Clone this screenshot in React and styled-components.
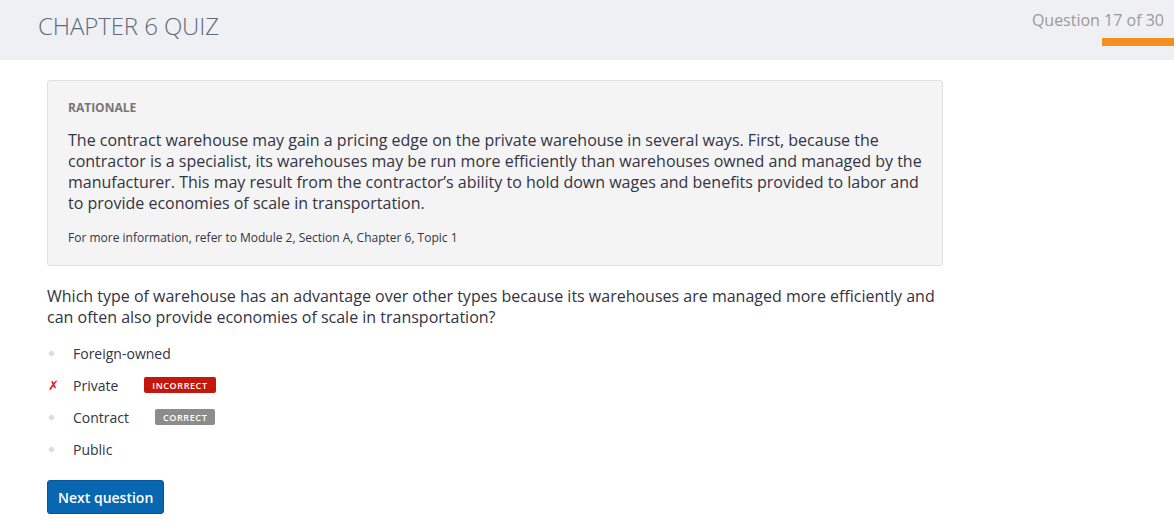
import React from "react";
import styled, { createGlobalStyle } from "styled-components";

const GlobalStyle = createGlobalStyle`
    body {
        margin: 0;
        background: #ffffff;
        font-family: "Open Sans", "Liberation Sans", sans-serif;
        color: #333333;
    }
`;

const Header = styled.div`
    height: 60px;
    background: #eff0f4;
    display: flex;
    justify-content: space-between;
    align-items: flex-start;
    box-sizing: border-box;
`;

const Title = styled.h1`
    margin: 0;
    padding: 10px 0 0 38px;
    font-size: 24px;
    line-height: 32px;
    font-weight: 300;
    color: #5f6b7a;
    letter-spacing: -0.1px;
`;

const Progress = styled.div`
    display: flex;
    flex-direction: column;
    align-items: flex-end;
    padding-top: 9px;
`;

const Counter = styled.div`
    font-size: 16px;
    color: #9a9a9a;
    padding-right: 10px;
    line-height: 22px;
`;

const ProgressBar = styled.div`
    margin-top: 7px;
    width: 72px;
    height: 8px;
    background: #f39020;
`;

const Main = styled.div`
    padding: 20px 0 0 47px;
    width: 896px;
`;

const Rationale = styled.div`
    background: #f4f4f4;
    border: 1px solid #e0e0e0;
    border-radius: 3px;
    padding: 18px 20px 19px 20px;
`;

const RationaleLabel = styled.div`
    font-size: 12px;
    font-weight: 700;
    color: #777777;
    margin-bottom: 14px;
`;

const RationaleText = styled.p`
    margin: 0;
    font-size: 16px;
    line-height: 21px;
    color: #333344;
`;

const MoreInfo = styled.p`
    margin: 16px 0 0 0;
    font-size: 12px;
    line-height: 16px;
    color: #333344;
`;

const Question = styled.p`
    margin: 20px 0 0 0;
    font-size: 16px;
    line-height: 21px;
    color: #333344;
`;

const Options = styled.ul`
    list-style: none;
    margin: 9px 0 0 0;
    padding: 0;
`;

const Option = styled.li`
    display: flex;
    align-items: center;
    height: 32px;
    font-size: 14px;
    color: #333344;
`;

const Marker = styled.span`
    width: 26px;
    display: flex;
    align-items: center;
    padding-left: 1px;
    box-sizing: border-box;
`;

const Cross = styled.span`
    color: #e8141c;
    font-family: "DejaVu Sans", sans-serif;
    font-size: 13px;
    font-weight: 700;
    font-style: italic;
`;

const Badge = styled.span`
    margin-left: 26px;
    height: 16px;
    padding: 0 8px;
    border-radius: 2px;
    background: ${(p) => (p.$correct ? "#8c8c8c" : "#c4180c")};
    color: #ffffff;
    font-size: 9px;
    font-weight: 600;
    letter-spacing: 0.6px;
    display: flex;
    align-items: center;
`;

const NextButton = styled.button`
    margin-top: 15px;
    height: 34px;
    padding: 0 10px;
    background: #0867b0;
    border: 1px solid #05579a;
    border-radius: 3px;
    color: #ffffff;
    font-family: "Open Sans", "Liberation Sans", sans-serif;
    font-size: 14px;
    font-weight: 600;
    cursor: pointer;
`;

const Dot = () => (
    <svg width="7" height="7" viewBox="0 0 7 7">
        <path d="M3.5 0.5 L6.5 3.5 L3.5 6.5 L0.5 3.5 Z" fill="#cfcfcf" />
        <rect x="2.5" y="2.5" width="2" height="2" fill="#ececec" />
    </svg>
);

const options = [
    { text: "Foreign-owned" },
    { text: "Private", wrong: true, badge: "INCORRECT" },
    { text: "Contract", badge: "CORRECT", correct: true },
    { text: "Public" },
];

export default function App() {
    return (
        <>
            <GlobalStyle />
            <Header>
                <Title>CHAPTER 6 QUIZ</Title>
                <Progress>
                    <Counter>Question 17 of 30</Counter>
                    <ProgressBar />
                </Progress>
            </Header>
            <Main>
                <Rationale>
                    <RationaleLabel>RATIONALE</RationaleLabel>
                    <RationaleText>
                        The contract warehouse may gain a pricing edge on the
                        private warehouse in several ways. First, because the
                        contractor is a specialist, its warehouses may be run
                        more efficiently than warehouses owned and managed by
                        the manufacturer. This may result from the
                        contractor’s ability to hold down wages and benefits
                        provided to labor and to provide economies of scale in
                        transportation.
                    </RationaleText>
                    <MoreInfo>
                        For more information, refer to Module 2, Section A,
                        Chapter 6, Topic 1
                    </MoreInfo>
                </Rationale>
                <Question>
                    Which type of warehouse has an advantage over other types
                    because its warehouses are managed more efficiently and can
                    often also provide economies of scale in transportation?
                </Question>
                <Options>
                    {options.map((o) => (
                        <Option key={o.text}>
                            <Marker>{o.wrong ? <Cross>✗</Cross> : <Dot />}</Marker>
                            {o.text}
                            {o.badge && (
                                <Badge $correct={o.correct}>{o.badge}</Badge>
                            )}
                        </Option>
                    ))}
                </Options>
                <NextButton>Next question</NextButton>
            </Main>
        </>
    );
}
